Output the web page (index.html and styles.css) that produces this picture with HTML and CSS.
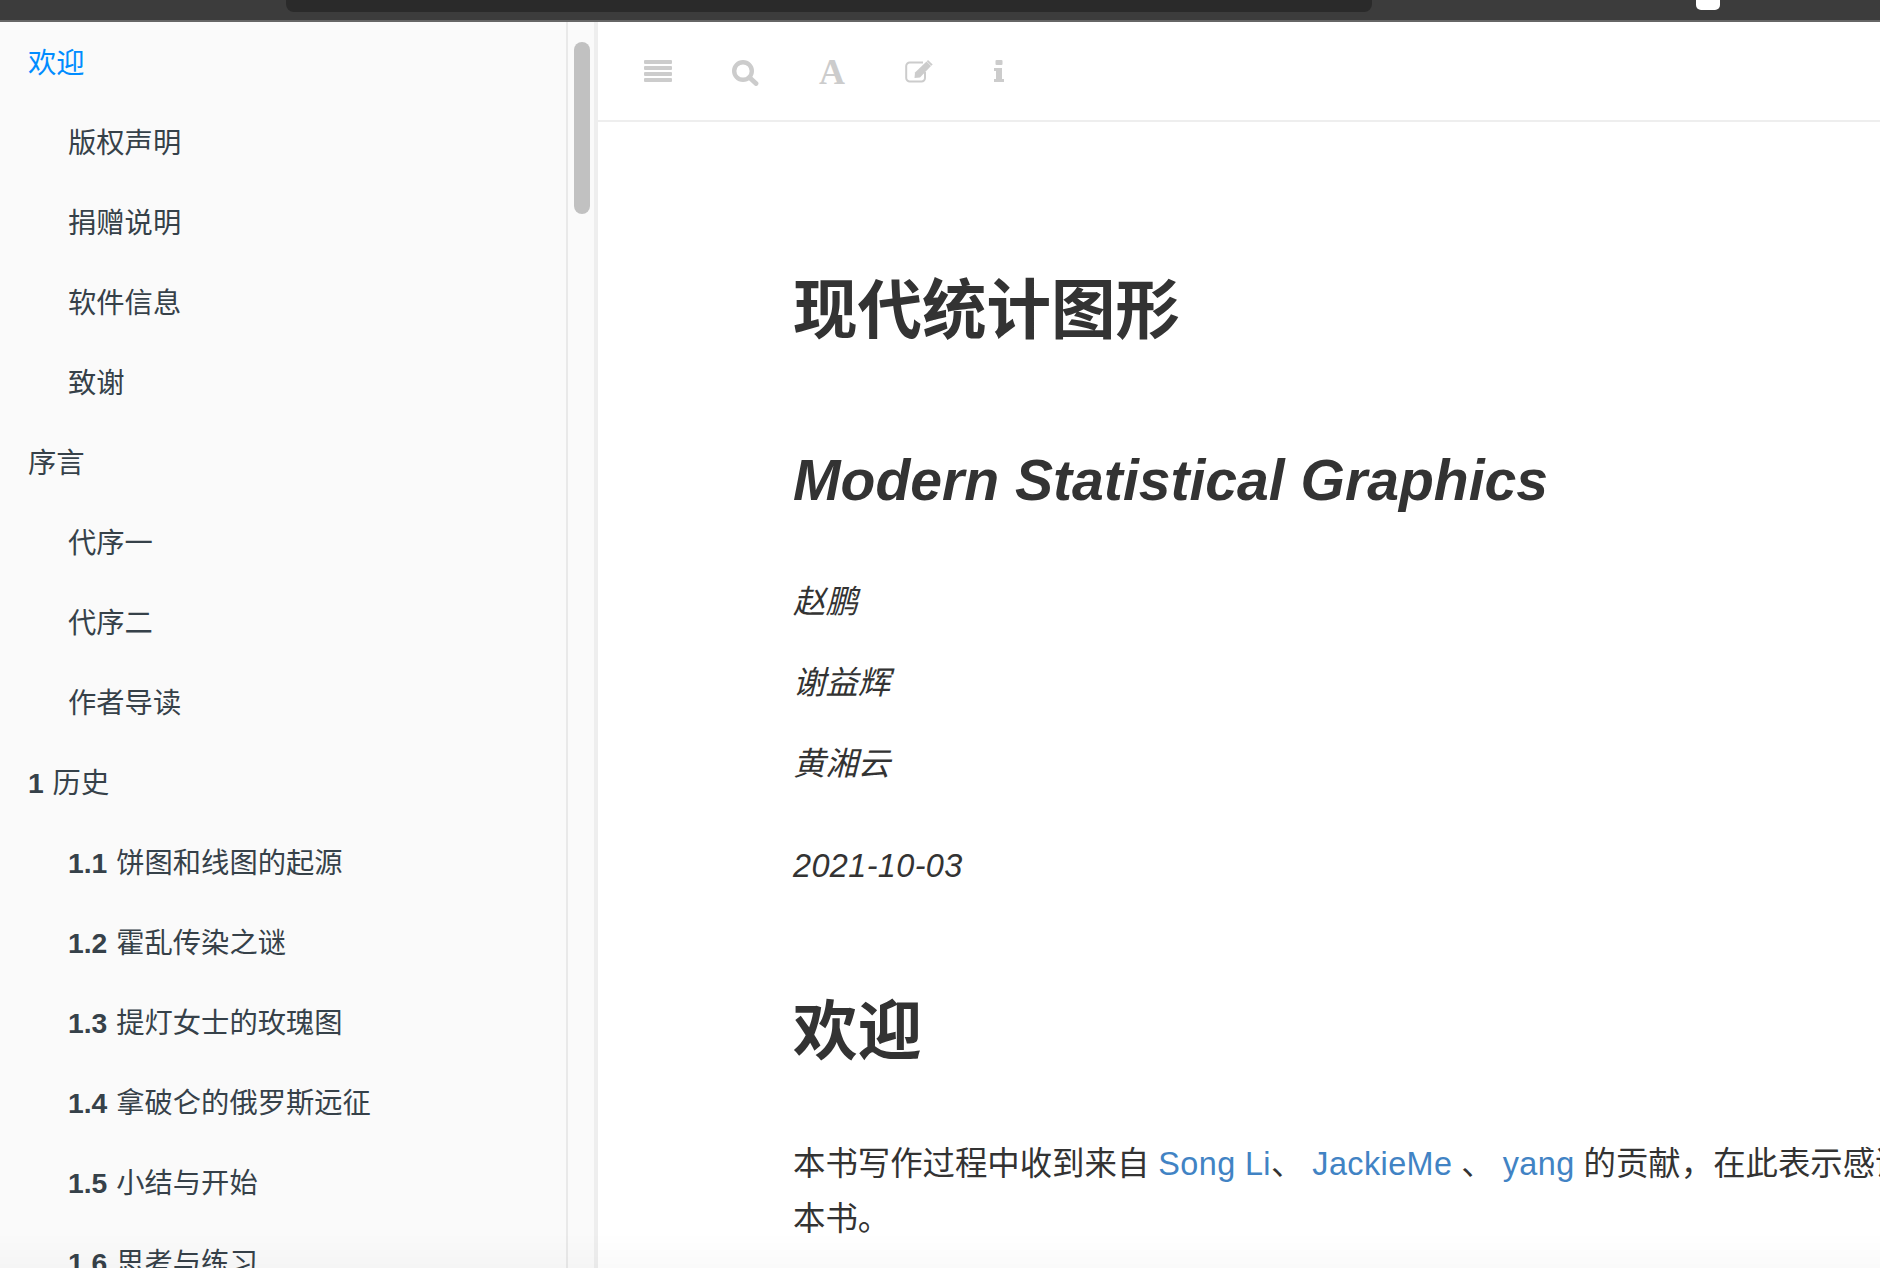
FILE: index.html
```html
<!doctype html>
<html lang="zh">
<head>
<meta charset="utf-8">
<title>现代统计图形</title>
<link rel="stylesheet" href="styles.css">
</head>
<body>
<div class="topBar">
  <div class="notch"></div>
  <div class="tab"></div>
</div>
<div class="book">
  <div class="sidebar">
    <ul class="summary">
      <li class="active">欢迎</li>
      <li class="sub">版权声明</li>
      <li class="sub">捐赠说明</li>
      <li class="sub">软件信息</li>
      <li class="sub">致谢</li>
      <li>序言</li>
      <li class="sub">代序一</li>
      <li class="sub">代序二</li>
      <li class="sub">作者导读</li>
      <li><b>1</b> 历史</li>
      <li class="sub"><b>1.1</b> 饼图和线图的起源</li>
      <li class="sub"><b>1.2</b> 霍乱传染之谜</li>
      <li class="sub"><b>1.3</b> 提灯女士的玫瑰图</li>
      <li class="sub"><b>1.4</b> 拿破仑的俄罗斯远征</li>
      <li class="sub"><b>1.5</b> 小结与开始</li>
      <li class="sub"><b>1.6</b> 思考与练习</li>
    </ul>
  </div>
  <div class="scrollTrack"><div class="scrollThumb"></div></div>
  <div class="main">
    <div class="toolbar">
      <svg class="icon" width="28" height="22" viewBox="0 0 28 22">
        <rect x="0" y="0" width="28" height="4" rx="1"/>
        <rect x="0" y="6" width="28" height="4" rx="1"/>
        <rect x="0" y="12" width="28" height="4" rx="1"/>
        <rect x="0" y="18" width="28" height="4" rx="1"/>
      </svg>
      <svg class="icon iconSearch" width="27" height="26" viewBox="0 0 27 26">
        <circle cx="11" cy="11" r="8.800" fill="none" stroke="#ccc" stroke-width="4.400"/>
        <path d="M17.500 17.500l6.500 6" fill="none" stroke="#ccc" stroke-width="4.800" stroke-linecap="round"/>
      </svg>
      <span class="iconFont">A</span>
      <svg class="icon iconEdit" width="28" height="23" viewBox="0 0 28 23">
        <path d="M20 12v6a3.500 3.500 0 0 1-3.500 3.500H5A3.500 3.500 0 0 1 1.200 18V6A3.500 3.500 0 0 1 5 2.500h13" fill="none" stroke="#ccc" stroke-width="2"/>
        <path d="M10 12.500L21.500 1.500l4.500 4.500L15 17.500l-5.500 .5z"/>
        <path d="M23 0l4.700 4.500-1.400 1.300L21.800 1.300z"/>
      </svg>
      <svg class="icon iconInfo" width="10" height="22" viewBox="0 0 10 22">
        <rect x="1.500" y="0" width="7" height="5" rx="1"/>
        <path d="M0 8h8v11h2v3H0v-3h2v-8H0z"/>
      </svg>
    </div>
    <div class="content">
      <h1 class="title">现代统计图形</h1>
      <h2 class="subtitle">Modern Statistical Graphics</h2>
      <p class="author">赵鹏</p>
      <p class="author">谢益辉</p>
      <p class="author">黄湘云</p>
      <p class="date">2021-10-03</p>
      <h1 class="welcome">欢迎</h1>
      <p class="para">本书写作过程中收到来自 <a>Song Li</a>、 <a>JackieMe</a> 、 <a>yang</a> 的贡献，在此表示感谢。<br>本书。</p>
    </div>
  </div>
</div>
<div class="bottomFade"></div>
</body>
</html>
```

FILE: styles.css
```css
html, body {
	margin: 0;
	height: 100%;
	overflow: hidden;
	background: #fff;
	font-family: "Liberation Sans", "Noto Sans CJK SC", sans-serif;
}
.topBar {
	height: 20px;
	background: #3c3c3c;
	border-bottom: 2px solid #666;
	display: flex;
}
.notch {
	width: 1086px;
	height: 12px;
	margin-left: 286px;
	background: #2a2a2a;
	border-radius: 0 0 8px 8px;
}
.tab {
	width: 24px;
	height: 10px;
	margin-left: 324px;
	background: #fff;
	border-radius: 0 0 5px 5px;
}
.book {
	display: flex;
	height: 1246px;
}
.sidebar {
	width: 566px;
	flex: none;
	background: #fafafa;
	border-right: 2px solid #e9e9e9;
	overflow: hidden;
}
.summary {
	list-style: none;
	margin: 0;
	padding: 1px 0 0 0;
}
.summary li {
	height: 80px;
	line-height: 80px;
	padding-left: 28px;
	font-size: 28.3px;
	color: #364149;
	white-space: nowrap;
}
.summary li b {
	margin-right: 1px;
}
.summary li.sub {
	padding-left: 68px;
}
.summary li.active {
	color: #008cff;
}
.scrollTrack {
	width: 26px;
	flex: none;
	background: #fafafa;
	border-right: 4px solid #eee;
	padding-top: 20px;
}
.scrollThumb {
	width: 16px;
	height: 172px;
	margin-left: 6px;
	background: #c1c1c1;
	border-radius: 8px;
}
.main {
	flex: 1;
	min-width: 0;
}
.toolbar {
	height: 60px;
	border-bottom: 2px solid #eee;
	display: flex;
	align-items: flex-start;
	padding-top: 38px;
	padding-left: 46px;
}
.icon {
	fill: #ccc;
	flex: none;
}
.iconSearch {
	margin-left: 60px;
}
.iconFont {
	margin-left: 59px;
	width: 28px;
	height: 24px;
	line-height: 24px;
	font-family: "Liberation Serif", serif;
	font-weight: bold;
	font-size: 36px;
	color: #ccc;
	text-align: center;
}
.iconEdit {
	margin-left: 59px;
}
.iconInfo {
	margin-left: 61px;
}
.content {
	padding-left: 195px;
	color: #333;
	white-space: nowrap;
	overflow: hidden;
}
.title, .welcome {
	font-size: 64.5px;
	font-weight: bold;
	line-height: 108px;
	margin: 0;
}
.title {
	margin-top: 135px;
}
.subtitle {
	font-size: 57.1px;
	font-style: italic;
	font-weight: bold;
	line-height: 95px;
	margin: 68px 0 0 0;
}
.author, .date {
	font-size: 32.4px;
	font-style: italic;
	line-height: 54px;
	margin: 0 0 27px 0;
}
.author:first-of-type {
	margin-top: 47px;
}
.date {
	margin-top: 48px;
	letter-spacing: 0.4px;
}
.welcome {
	margin-top: 85px;
}
.para {
	font-size: 32.4px;
	line-height: 55px;
	margin: 51px 0 0 0;
}
.para a {
	color: #4183c4;
	letter-spacing: 0.4px;
}
.bottomFade {
	position: fixed;
	left: 0;
	right: 0;
	bottom: 0;
	height: 36px;
	background: linear-gradient(rgba(0,0,0,0), rgba(0,0,0,0.02));
	pointer-events: none;
}
```
